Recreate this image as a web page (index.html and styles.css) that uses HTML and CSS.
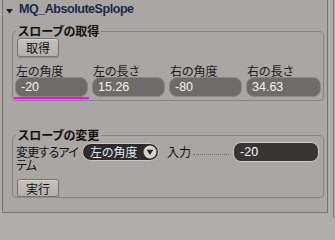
FILE: index.html
```html
<!DOCTYPE html>
<html lang="ja">
<head>
<meta charset="utf-8">
<title>MQ_AbsoluteSplope</title>
<link rel="stylesheet" href="styles.css">
</head>
<body>
<div class="window">
  <div class="frame">
    <div class="header">
      <svg class="caret" width="7" height="5" viewBox="0 0 7 5"><path d="M0 0H7L3.5 4.5Z" fill="#1a1a1a"/></svg>
      <span class="title">MQ_AbsoluteSplope</span>
    </div>

    <fieldset class="group group-get">
      <legend class="legend">スローブの取得</legend>
      <button class="btn" type="button">取得</button>
      <div class="fields">
        <div class="field">
          <div class="label">左の角度</div>
          <div class="value">-20</div>
          <div class="mark"></div>
        </div>
        <div class="field">
          <div class="label">左の長さ</div>
          <div class="value">15.26</div>
        </div>
        <div class="field">
          <div class="label">右の角度</div>
          <div class="value">-80</div>
        </div>
        <div class="field">
          <div class="label">右の長さ</div>
          <div class="value">34.63</div>
        </div>
      </div>
    </fieldset>

    <fieldset class="group group-set">
      <legend class="legend">スローブの変更</legend>
      <div class="row">
        <div class="row-label">変更するアイテム</div>
        <div class="select">
          <span class="select-text">左の角度</span>
          <svg class="select-arrow" width="14" height="14" viewBox="0 0 14 14"><circle cx="7" cy="7" r="6.5" fill="#d6d4d2"/><path d="M3.6 4.8H10.4L7 10Z" fill="#2a2727"/></svg>
        </div>
        <div class="in-label">入力</div>
        <div class="leader"></div>
        <div class="entry">-20</div>
      </div>
      <button class="btn btn-run" type="button">実行</button>
    </fieldset>
  </div>
</div>
</body>
</html>
```
FILE: styles.css
```css
html, body {
  margin: 0;
  padding: 0;
}
body {
  width: 335px;
  height: 218px;
  overflow: hidden;
  background: #b1adaa;
  font-family: "Noto Sans CJK JP", "Liberation Sans", sans-serif;
  color: #111;
}
.window {
  width: 333px;
  height: 218px;
  border-right: 1px solid #7d7976;
}
.frame {
  margin-left: 2px;
  width: 324px;
  height: 212px;
  border-left: 1px solid #77736f;
  border-right: 1px solid #77736f;
  border-bottom: 1px solid #77736f;
  background: #aaa6a3;
}
.header {
  height: 24px;
  display: flex;
  align-items: flex-start;
  padding-left: 3px;
}
.caret {
  margin-top: 9px;
  display: block;
}
.title {
  margin-left: 6px;
  margin-top: 1px;
  font-family: "Liberation Sans", sans-serif;
  font-weight: bold;
  font-size: 12.5px;
  letter-spacing: -0.45px;
  line-height: 16px;
  color: #1b2748;
}
.group {
  margin: 0 0 0 9px;
  width: 312px;
  box-sizing: border-box;
  border: 1px solid #86827f;
  border-radius: 4px;
  padding: 0 3px 0 2px;
  min-width: 0;
}
.legend {
  padding: 0 2px;
  margin-left: 1px;
  font-weight: bold;
  font-size: 12px;
  line-height: 14px;
  font-feature-settings: "palt";
  color: #111;
}
.btn {
  display: block;
  margin: 0 0 0 2px;
  width: 42px;
  height: 19px;
  padding: 0;
  border: 1px solid #77736f;
  border-radius: 3px;
  background: linear-gradient(#c4c0bd, #b3afac);
  box-shadow: inset 0 1px 0 #d6d2cf, 0 1px 0 #8f8b88;
  font-family: "Noto Sans CJK JP", sans-serif;
  font-size: 12px;
  line-height: 16px;
  color: #111;
}
.group-get {
  height: 77px;
}
.fields {
  display: grid;
  grid-template-columns: 73px 73px 73px 75px;
  column-gap: 4px;
  margin-top: 7px;
}
.label {
  font-size: 12px;
  line-height: 13px;
  padding-left: 1px;
  font-feature-settings: "palt";
  color: #1a1a1a;
}
.value {
  height: 20px;
  box-sizing: border-box;
  border: 1px solid #8a8683;
  border-radius: 8px;
  background: #6f6b68;
  color: #f4f4f4;
  font-family: "Liberation Sans", sans-serif;
  font-size: 12.5px;
  line-height: 18px;
  padding-left: 5px;
}
.mark {
  height: 2px;
  width: 75px;
  margin-left: -1px;
  background: #ff00ff;
}
.group-set {
  margin-top: 27px;
  height: 70px;
}
.row {
  display: flex;
  align-items: flex-start;
  height: 36px;
}
.row-label {
  width: 66px;
  flex: none;
  font-size: 12px;
  line-height: 13px;
  letter-spacing: -0.8px;
  padding-left: 1px;
  margin-top: 3px;
  font-feature-settings: "palt";
}
.select {
  margin-left: 0;
  margin-top: 1px;
  width: 77px;
  height: 18px;
  flex: none;
  box-sizing: border-box;
  border: 1px solid #cbc8c5;
  border-radius: 9px;
  background: #2e2b2a;
  display: flex;
  align-items: center;
  justify-content: space-between;
  padding: 0 1px 0 7px;
}
.select-text {
  color: #dde8ff;
  font-size: 12px;
  line-height: 14px;
  font-feature-settings: "palt";
}
.select-arrow {
  display: block;
}
.in-label {
  margin-left: 8px;
  margin-top: 3px;
  font-size: 12px;
  line-height: 13px;
}
.leader {
  width: 36px;
  margin: 12px 4px 0 2px;
  border-top: 1px dotted #6e6a67;
}
.entry {
  width: 86px;
  height: 20px;
  box-sizing: border-box;
  border: 1px solid #cfccca;
  border-radius: 8px;
  background: #393534;
  color: #ffffff;
  font-family: "Liberation Sans", sans-serif;
  font-size: 12.5px;
  line-height: 18px;
  padding-left: 6px;
}
.btn-run {
  margin-top: 1px;
  height: 18px;
  line-height: 15px;
}
```
